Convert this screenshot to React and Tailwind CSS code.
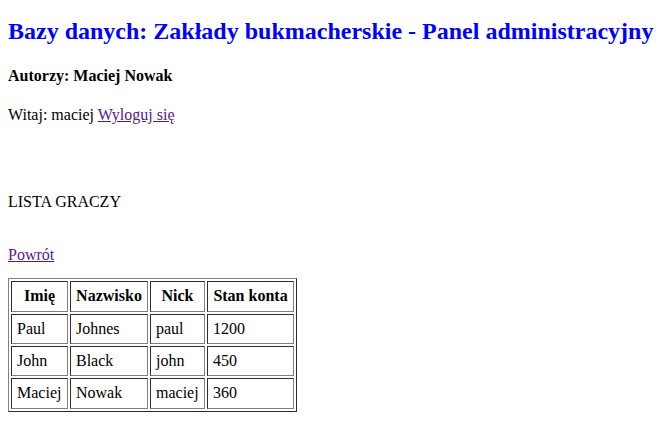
export default function App() {
  const rows = [
    ["Paul", "Johnes", "paul", "1200"],
    ["John", "Black", "john", "450"],
    ["Maciej", "Nowak", "maciej", "360"],
  ];
  const th = "border border-[#808080] [border-style:inset] p-[5px] font-bold text-center";
  const td = "border border-[#808080] [border-style:inset] p-[5px] text-left";
  return (
    <div className="bg-white text-black px-2 pt-px min-h-[434px] font-['Liberation_Serif',serif] text-[16px] leading-[1.15]">
      <h2 className="text-[24px] font-bold text-[#0000ff] mt-[17px] mb-[18px]">
        Bazy danych: Zakłady bukmacherskie - Panel administracyjny
      </h2>
      <h4 className="text-[16px] font-bold my-[21px]">Autorzy: Maciej Nowak</h4>
      <p className="my-4">
        Witaj: maciej <a href="#" className="text-[#551a8b] underline">Wyloguj się</a>
      </p>
      <div className="h-[37px]" />
      <p className="my-4">LISTA GRACZY</p>
      <div className="h-[18px]" />
      <p>
        <a href="#" className="text-[#551a8b] underline">Powrót</a>
      </p>
      <table className="mt-[14px] border border-[#808080] [border-style:outset] border-separate border-spacing-[2px]">
        <thead>
          <tr>
            <th className={th + " w-[57px]"}>Imię</th>
            <th className={th + " w-[78px]"}>Nazwisko</th>
            <th className={th + " w-[55px]"}>Nick</th>
            <th className={th + " w-[87px]"}>Stan konta</th>
          </tr>
        </thead>
        <tbody>
          {rows.map((r, i) => (
            <tr key={i}>
              {r.map((c, j) => (
                <td key={j} className={td}>{c}</td>
              ))}
            </tr>
          ))}
        </tbody>
      </table>
    </div>
  );
}
